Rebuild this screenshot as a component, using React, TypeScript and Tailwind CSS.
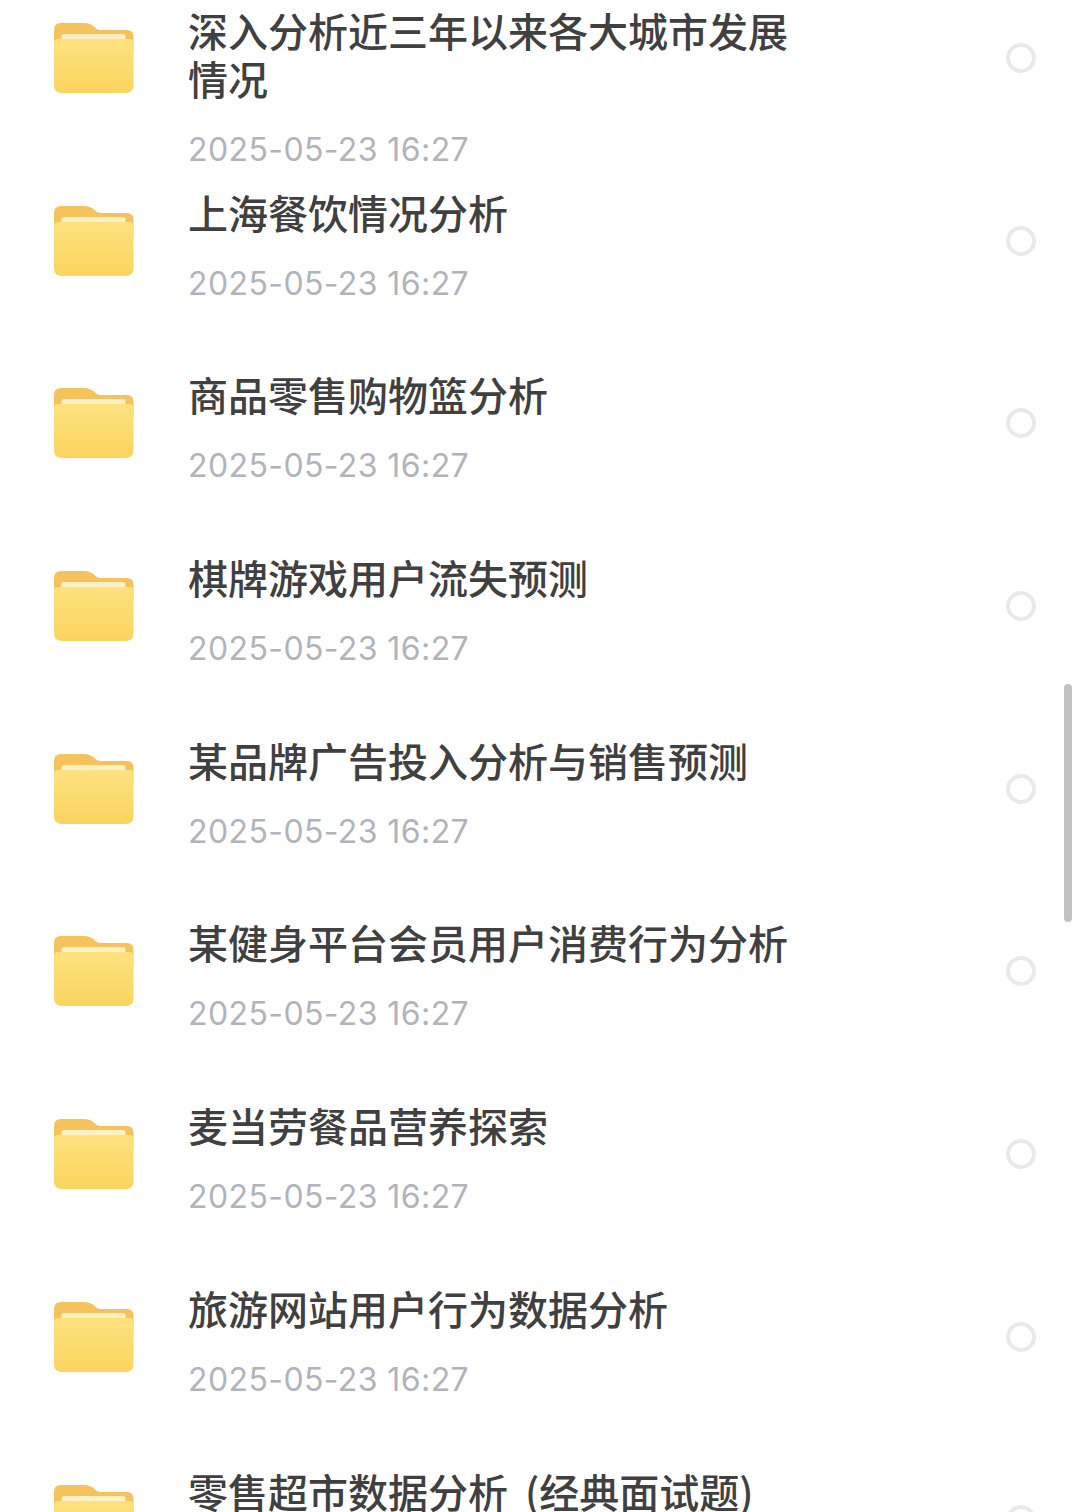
const files = [
  '深入分析近三年以来各大城市发展情况',
  '上海餐饮情况分析',
  '商品零售购物篮分析',
  '棋牌游戏用户流失预测',
  '某品牌广告投入分析与销售预测',
  '某健身平台会员用户消费行为分析',
  '麦当劳餐品营养探索',
  '旅游网站用户行为数据分析',
  '零售超市数据分析 (经典面试题)',
]

function FolderIcon() {
  return (
    <svg width="80" height="72" viewBox="0 0 80 72" className="shrink-0 blur-[0.4px]">
      <defs>
        <linearGradient id="folder-front" x1="0" y1="0" x2="0" y2="1">
          <stop offset="0" stopColor="#fde27f" />
          <stop offset="1" stopColor="#fbd45e" />
        </linearGradient>
      </defs>
      <path
        d="M0 8 Q0 1 7 1 H30 Q36 1 40 4.500 Q43 8 47 8 H73 Q79.500 8 79.500 15 V30 H0 Z"
        fill="#f6c25c"
      />
      <rect x="7.500" y="12" width="64" height="8" rx="2.500" fill="#fdf0c4" />
      <path
        d="M0 21 Q0 17 4 17 H75.500 Q79.500 17 79.500 21 V63 Q79.500 71 71.500 71 H8 Q0 71 0 63 Z"
        fill="url(#folder-front)"
      />
    </svg>
  )
}

export default function App() {
  return (
    <div className="relative h-[1512px] w-[1080px] overflow-hidden bg-white font-['Noto_Sans_CJK_SC','Noto_Sans',sans-serif]">
      {files.map((name, index) => (
        <div className="flex h-[182.7px] items-start" key={name}>
          <div className="ml-[54px] mt-[22px]">
            <FolderIcon />
          </div>
          <div className={`ml-[54px] w-[600px] ${index === 0 ? 'pt-[6px]' : 'pt-[5px]'}`}>
            <p className="text-[40px] font-medium leading-[48px] text-[#404040] [word-spacing:8px]">{name}</p>
            <p className="mt-[28px] font-['Inter',sans-serif] text-[32px] leading-[40px] tracking-[0.4px] text-[#b1b4ba]">2025-05-23 16:27</p>
          </div>
          <div className="ml-auto mr-[44px] mt-[43px] h-[30px] w-[30px] rounded-full border-[4px] border-[#e9e9e9]" />
        </div>
      ))}
      <div className="absolute left-[1064px] top-[684px] h-[238px] w-[8px] rounded-full bg-[#c2c2c2]" />
    </div>
  )
}
